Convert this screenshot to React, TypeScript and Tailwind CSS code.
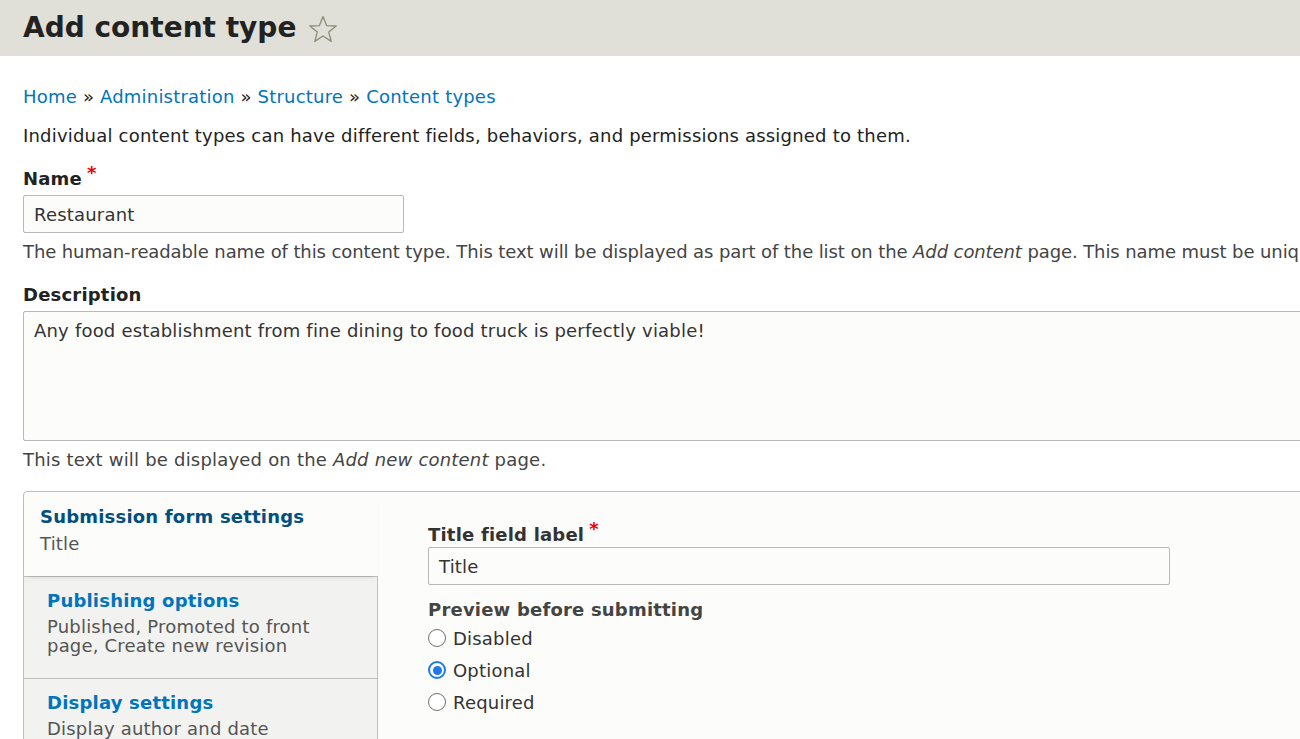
import React from "react";

const font = { fontFamily: '"DejaVu Sans", Verdana, sans-serif' };

const Star = () => (
  <svg width="30" height="28" viewBox="0 0 30 28" className="ml-[12px] mt-[2px]">
    <polygon
      points="15,1.5 18.6,10.6 28.2,11 20.7,17.1 23.3,26.4 15,21 6.7,26.4 9.3,17.1 1.8,11 11.4,10.6"
      fill="none"
      stroke="#8c8c78"
      strokeWidth="1.3"
      strokeLinejoin="round"
    />
  </svg>
);

const Req = () => <span className="text-[#e00] ml-[5px] relative -top-[6px]">*</span>;

const Radio = ({ label, checked }: { label: string; checked?: boolean }) => (
  <div className="flex items-center h-[32px]">
    {checked ? (
      <span className="w-[18px] h-[18px] rounded-full border-2 border-[#1f7ae8] bg-white flex items-center justify-center">
        <span className="w-[9px] h-[9px] rounded-full bg-[#1f7ae8]" />
      </span>
    ) : (
      <span className="w-[18px] h-[18px] rounded-full border border-[#6e6e6e] bg-white" />
    )}
    <span className="ml-[7px] text-[#333]">{label}</span>
  </div>
);

const Tab = ({ title, summary }: { title: string; summary: string }) => (
  <div className="bg-[#f2f2f0] border-r border-t border-[#bfbfbf] pl-[23px] pr-[40px] pt-[12px] pb-[23px]">
    <div className="font-bold text-[#0074bd] leading-[24px]">{title}</div>
    <div className="text-[#555] leading-[19px] mt-[4px]">{summary}</div>
  </div>
);

export default function App() {
  return (
    <div className="w-[1300px] h-[739px] overflow-hidden bg-white text-[18px] tracking-[0.2px] text-[#222]" style={font}>
      <header className="h-[56px] bg-[#e0e0d8] flex items-center pl-[23px]">
        <h1 className="text-[28px] font-bold tracking-normal text-[#222] leading-none">Add content type</h1>
        <Star />
      </header>

      <main className="pl-[23px] w-[1500px]">
        <nav className="mt-[29px] leading-[24px] text-[#0074bd]">
          Home <span className="text-[#222]">»</span> Administration <span className="text-[#222]">»</span> Structure{" "}
          <span className="text-[#222]">»</span> Content types
        </nav>
        <p className="mt-[15px] leading-[24px] text-[#222]">
          Individual content types can have different fields, behaviors, and permissions assigned to them.
        </p>

        <div className="mt-[19px] leading-[24px] font-bold">
          Name
          <Req />
        </div>
        <div className="mt-[4px] w-[381px] h-[38px] border border-[#b8b8b8] rounded-[2px] bg-[#fcfcfa] pl-[10px] flex items-center text-[#333]">
          Restaurant
        </div>
        <p className="mt-[7px] leading-[24px] text-[#444] whitespace-nowrap tracking-[-0.1px]">
          The human-readable name of this content type. This text will be displayed as part of the list on the{" "}
          <em>Add content</em> page. This name must be unique.
        </p>

        <div className="mt-[19px] leading-[24px] font-bold">Description</div>
        <div className="mt-[4px] w-[1400px] h-[130px] border border-[#b8b8b8] rounded-[2px] bg-[#fcfcfa] pl-[10px] pt-[5px] text-[#333]">
          Any food establishment from fine dining to food truck is perfectly viable!
        </div>
        <p className="mt-[7px] leading-[24px] text-[#444]">
          This text will be displayed on the <em>Add new content</em> page.
        </p>

        <div className="mt-[19px] w-[1400px] border border-[#bfbfbf] rounded-tl-[4px] bg-[#fcfcfa] flex">
          <div className="w-[354px] shrink-0">
            <div className="h-[84px] pl-[16px] pt-[13px] shadow-[0_4px_6px_-4px_rgba(0,0,0,0.18)] relative">
              <div className="font-bold text-[#004f80] leading-[24px]">Submission form settings</div>
              <div className="text-[#555] leading-[24px] mt-[3px]">Title</div>
            </div>
            <Tab title="Publishing options" summary="Published, Promoted to front page, Create new revision" />
            <Tab title="Display settings" summary="Display author and date" />
          </div>

          <div className="pl-[50px] pt-[31px]">
            <div className="font-bold text-[#333] leading-[24px]">
              Title field label
              <Req />
            </div>
            <div className="mt-[0px] w-[742px] h-[38px] border border-[#b8b8b8] rounded-[2px] bg-[#fcfcfa] pl-[10px] flex items-center text-[#333]">
              Title
            </div>
            <div className="mt-[13px] font-bold text-[#444] leading-[24px]">Preview before submitting</div>
            <div className="mt-[0px]">
              <Radio label="Disabled" />
              <Radio label="Optional" checked />
              <Radio label="Required" />
            </div>
            <div className="mt-[19px] font-bold text-[#444] leading-[24px]">Explanation or submission guidelines</div>
          </div>
        </div>
      </main>
    </div>
  );
}
